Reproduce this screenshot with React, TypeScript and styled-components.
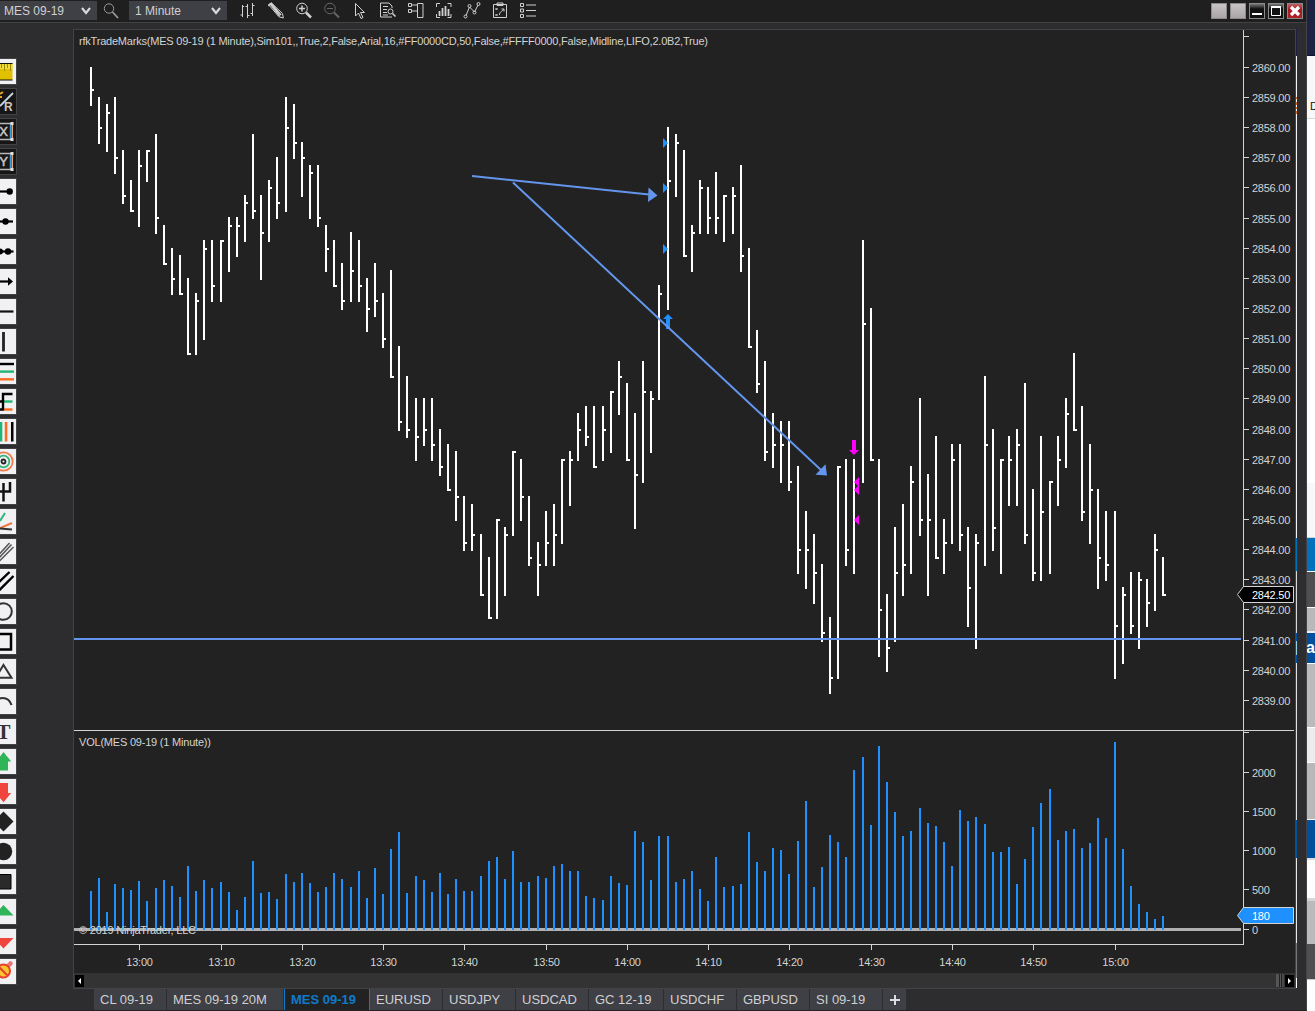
import type { ReactNode } from "react";
import styled, { createGlobalStyle } from "styled-components";

// one entry per minute, starting 12:54: [high, low, close, volume] on the plot's y scale
const bars: [number, number, number, number][] = [
  [67, 106, 89, 891], [97, 144, 127, 878], [104, 152, 112, 912], [97, 174, 157, 884],
  [150, 204, 195, 888], [180, 212, 210, 890], [150, 227, 165, 881], [150, 182, 150, 901],
  [134, 234, 217, 888], [225, 265, 263, 880], [248, 295, 278, 886], [255, 295, 293, 897],
  [278, 355, 353, 866], [293, 355, 300, 891], [240, 340, 248, 880], [240, 302, 285, 888],
  [240, 302, 240, 882], [217, 272, 225, 892], [217, 257, 225, 910], [195, 242, 202, 897],
  [134, 219, 210, 861], [195, 280, 232, 893], [180, 242, 187, 892], [157, 219, 202, 899],
  [97, 212, 127, 874], [104, 159, 142, 882], [142, 197, 157, 873], [165, 219, 172, 883],
  [165, 227, 217, 892], [225, 272, 248, 887], [240, 287, 285, 873], [263, 310, 300, 879],
  [232, 302, 270, 887], [240, 302, 285, 871], [278, 332, 308, 898], [263, 317, 300, 868],
  [293, 348, 338, 894], [270, 378, 376, 849], [346, 431, 421, 832], [376, 438, 429, 893],
  [398, 461, 436, 876], [398, 446, 429, 880], [398, 461, 444, 892], [429, 476, 466, 873],
  [444, 491, 489, 894], [451, 521, 496, 879], [496, 551, 542, 891], [504, 551, 534, 891],
  [534, 596, 594, 876], [557, 619, 617, 861], [519, 619, 519, 857], [527, 596, 534, 879],
  [451, 536, 451, 851], [459, 521, 496, 882], [496, 566, 557, 882], [542, 596, 564, 876],
  [511, 566, 542, 878], [504, 566, 534, 866], [459, 544, 459, 864], [451, 506, 459, 871],
  [413, 461, 429, 871], [406, 446, 436, 896], [406, 468, 466, 898], [406, 461, 429, 900],
  [391, 453, 391, 876], [361, 415, 376, 883], [383, 461, 459, 885], [413, 529, 474, 831],
  [361, 483, 391, 842], [391, 453, 398, 880], [285, 400, 293, 836], [127, 310, 180, 836],
  [134, 197, 142, 882], [150, 257, 255, 879], [225, 272, 232, 871], [180, 234, 187, 889],
  [187, 234, 217, 901], [172, 234, 217, 857], [195, 242, 195, 887], [187, 234, 195, 886],
  [165, 272, 255, 884], [248, 348, 346, 832], [330, 393, 383, 862], [361, 461, 451, 871],
  [413, 468, 444, 848], [421, 483, 444, 850], [421, 491, 481, 874], [466, 574, 549, 841],
  [511, 589, 549, 801], [534, 604, 572, 887], [564, 642, 632, 867], [617, 694, 677, 835],
  [466, 679, 466, 842], [459, 566, 549, 857], [459, 574, 481, 770], [240, 483, 323, 757],
  [308, 461, 459, 825], [459, 657, 609, 746], [594, 672, 647, 782], [527, 642, 572, 812],
  [504, 596, 564, 836], [466, 574, 481, 831], [398, 536, 519, 808], [474, 596, 519, 823],
  [436, 559, 557, 826], [519, 574, 542, 842], [444, 544, 459, 866], [444, 551, 534, 810],
  [527, 627, 587, 821], [534, 649, 542, 817], [376, 566, 444, 824], [429, 551, 527, 852],
  [459, 574, 459, 852], [436, 506, 459, 847], [429, 506, 444, 884], [383, 544, 534, 859],
  [489, 581, 572, 827], [436, 581, 511, 803], [481, 574, 481, 789], [436, 506, 459, 840],
  [398, 468, 413, 831], [353, 431, 429, 829], [406, 521, 511, 848], [444, 544, 489, 843],
  [489, 589, 557, 818], [511, 581, 564, 838], [511, 679, 625, 742], [587, 664, 594, 849],
  [572, 634, 625, 886], [572, 649, 579, 904], [579, 627, 602, 912], [534, 611, 549, 919],
  [557, 596, 594, 916],
];

const barX = (i: number) => Math.floor(90 + 8.1275 * i);

const prices = Array.from({ length: 22 }, (_, i) => ({
  label: `${2860 - i}.00`,
  y: Math.floor(67.4 + 30.14 * i),
}));

const volumes = [
  { label: "2000", y: 772 },
  { label: "1500", y: 811 },
  { label: "1000", y: 850 },
  { label: "500", y: 889 },
  { label: "0", y: 929 },
];

const times = [
  "13:00", "13:10", "13:20", "13:30", "13:40", "13:50", "14:00",
  "14:10", "14:20", "14:30", "14:40", "14:50", "15:00",
];

const tabs = [
  { name: "CL 09-19", width: 72 },
  { name: "MES 09-19 20M", width: 116 },
  { name: "MES 09-19", width: 86, active: true },
  { name: "EURUSD", width: 72 },
  { name: "USDJPY", width: 72 },
  { name: "USDCAD", width: 72 },
  { name: "GC 12-19", width: 74 },
  { name: "USDCHF", width: 72 },
  { name: "GBPUSD", width: 72 },
  { name: "SI 09-19", width: 72 },
];

const backdrop = [
  [55, "#1d2343"], [1, "#10142c"], [62, "#f8f8f9"], [1, "#d8d8d8"],
  [364, "#ffffff"], [54, "#f8f8f8"], [1, "#d5d5d5"], [33, "#0072bc"],
  [1, "#ffffff"], [35, "#4f4f4f"], [1, "#ffffff"], [23, "#b9b9b9"],
  [2, "#efefef"], [30, "#004f9e"], [1, "#ffffff"], [63, "#bababa"],
  [1, "#ffffff"], [34, "#ececec"], [1, "#ffffff"], [56, "#b8b8b8"],
  [1, "#ffffff"], [38, "#00519c"], [2, "#dcdcdc"], [38, "#fdfdfd"],
  [3, "#d6d6d6"], [43, "#bababa"], [35, "#4f4f4f"], [1, "#c8c8c8"],
  [31, "#fdfdfd"],
] as [number, string][];

const sliver = [
  [27, "#1d2040"], [41, "#f4f4f4"], [2, "#d2691e"], [3, "#f4f4f4"],
  [3, "#d2691e"], [2, "#f4f4f4"], [2, "#d2691e"], [2, "#f4f4f4"],
  [3, "#d2691e"], [424, "#f4f4f4"], [33, "#0072bc"], [62, "#d8d8d8"],
  [8, "#004f9e"], [14, "#9ad3e0"], [8, "#004f9e"], [157, "#e0e0e0"],
  [38, "#00519c"], [85, "#e6e6e6"], [35, "#777777"], [10, "#ffffff"],
] as [number, string][];

const tools: { dark?: boolean; art: ReactNode }[] = [
  {
    art: (
      <>
        <path d="M0 4h12.5v17H0z" fill="#e0c000" />
        <path d="M0 5h12.5v5H0z" fill="#f2dc38" />
        <path d="M1.5 5v4M4.5 5v7M7.5 5v4M10.500 5v7" stroke="#a08a00" />
        <path d="M0 4.5h12.5M0 21h12.5" stroke="#111" />
      </>
    ),
  },
  {
    dark: true,
    art: (
      <>
        <path d="M0 5l3-2M0 8h2" stroke="#f0a020" strokeWidth="2" />
        <path d="M0 17L13 4" stroke="#c9d8e4" strokeWidth="1.8" />
        <text x="4" y="22" fontSize="12" fontWeight="bold" fill="#cfc4b8">R</text>
      </>
    ),
  },
  ...["X", "Y"].map((letter) => ({
    dark: true,
    art: (
      <>
        <path d="M0 4.5h12M0 20.5h12" stroke="#b8b8b8" strokeWidth="1.5" />
        <path d="M10.5 5v15" stroke="#3d9be0" strokeWidth="1.5" />
        <path d="M12.3 5v15" stroke="#e8a878" strokeWidth="1.5" />
        <path d="M10.5 3h3v3h-3zM10.5 19h3v3h-3z" fill="#e8dcd4" />
        <text x="-.8" y="17" fontSize="13" fill="#c8c4c0" stroke="#c8c4c0" strokeWidth=".5">{letter}</text>
      </>
    ),
  })),
  { art: <><path d="M0 12.5h10" stroke="#000" strokeWidth="2.2" /><circle cx="9.7" cy="12.5" r="3.2" /></> },
  { art: <><path d="M0 12.5h13" stroke="#000" strokeWidth="2.2" /><circle cx="5.5" cy="12.5" r="3.2" /></> },
  { art: <><path d="M0 12.5h13.5" stroke="#000" strokeWidth="2.2" /><circle cx="0" cy="12.5" r="3" /><circle cx="8" cy="12.5" r="3.2" /></> },
  { art: <><path d="M0 12.5h11" stroke="#000" strokeWidth="2.2" /><path d="M8 8.2l5 4.3-5 4.3z" /></> },
  { art: <path d="M0 12.5h13.5" stroke="#111" strokeWidth="2.2" /> },
  { art: <path d="M3.5 3v19.5" stroke="#222" strokeWidth="2.8" /> },
  {
    art: (
      <g strokeWidth="2.4">
        <path d="M0 5h14" stroke="#000" />
        <path d="M0 12.6h14" stroke="#22b573" />
        <path d="M0 20.3h14" stroke="#ff6a20" />
      </g>
    ),
  },
  {
    art: (
      <g fill="none" strokeWidth="2.4">
        <path d="M3.5 12.5h9" stroke="#22b573" />
        <path d="M2 20.5h10.500" stroke="#ff6a20" />
        <path d="M0 20.5h3M3 21.5V5h9.500M0 12.500h3" stroke="#000" />
      </g>
    ),
  },
  {
    art: (
      <>
        <path d="M0 3h2.3v19.5H0z" fill="#22b573" />
        <path d="M4.8 3h2.5v19.5H4.8z" fill="#ff6a20" />
        <path d="M11 3h2.5v19.5H11z" />
      </>
    ),
  },
  {
    art: (
      <g fill="none" strokeWidth="1.8">
        <circle cx="3.5" cy="12.5" r="9.2" stroke="#f08050" />
        <circle cx="3.5" cy="12.5" r="5.8" stroke="#35b57a" />
        <circle cx="3.5" cy="12.5" r="2" stroke="#222" />
      </g>
    ),
  },
  { art: <path d="M3.5 4v18.5M10 3v9.500H0" stroke="#111" strokeWidth="2.5" fill="none" /> },
  {
    art: (
      <g strokeWidth="2">
        <path d="M0 12L5 4" stroke="#35b57a" />
        <path d="M0 19l12-5" stroke="#f07840" />
        <path d="M0 19.5l12 1" stroke="#333" />
      </g>
    ),
  },
  { art: <path d="M-2 16.5L9.5 4M-2 20L11.5 5.500M-2 23.500L13.500 8" stroke="#555" strokeWidth="1.5" /> },
  { art: <path d="M-2 14L9.5 3M-2 22.500L13.500 7" stroke="#000" strokeWidth="2.4" /> },
  { art: <circle cx="3.5" cy="12.5" r="8.3" fill="none" stroke="#333" strokeWidth="2" /> },
  { art: <path d="M-3 5h14v15.500h-14" fill="none" stroke="#000" strokeWidth="2.5" /> },
  { art: <path d="M3.5 6l8 12.800h-16z" fill="none" stroke="#333" strokeWidth="2" /> },
  { art: <path d="M-1 9.500C5 8 9.500 10 11.500 16" fill="none" stroke="#333" strokeWidth="2.200" /> },
  { art: <text x="-3.5" y="19.5" fontSize="21" fontWeight="bold" fontFamily="Liberation Serif, serif" fill="#333">T</text> },
  { art: <path d="M3.5 3l7.700 9.500H8v9H-1v-9h-3z" fill="#2fb457" /> },
  { art: <path d="M-1 4h9v10h3.200L3.500 23.200-4 14h3z" fill="#f0453f" /> },
  { art: <path d="M3.5 2.500l10 10-10 10-10-10z" fill="#222" /> },
  { art: <circle cx="3.5" cy="12.5" r="8.7" fill="#222" /> },
  { art: <path d="M-4 5.500h15v14.500h-15z" fill="#2a2a2a" stroke="#000" /> },
  { art: <path d="M3.5 6l10 10.500h-20z" fill="#2fb457" /> },
  { art: <path d="M3.5 19.500l10-10.500h-20z" fill="#f0453f" /> },
  {
    art: (
      <>
        <path d="M6 9l4.500-4.500" stroke="#e87878" strokeWidth="4.5" strokeLinecap="round" />
        <circle cx="3.5" cy="12" r="6.5" fill="#f7c52d" stroke="#e8412f" strokeWidth="2" />
        <path d="M-1 8l9 9" stroke="#e8412f" strokeWidth="2" />
      </>
    ),
  },
];

const toolbarIcons: { dim?: boolean; art: ReactNode }[] = [
  { art: <path d="M3.500 5v12M1.500 15h2M3.500 6.500h1.500M8.500 4v14M6.500 6.500h2M8.500 15.500h2M13.500 3v13M11.500 13.500h2M13.500 5.500h2" /> },
  {
    art: (
      <>
        <path d="M1.500 4.500l3-1.500 11 10.500.8 4.500-4.300-1.200z" />
        <path d="M3 3.500l9.500 12.500M4 3l10 12M1.500 6l3-3" strokeWidth="1.5" />
      </>
    ),
  },
  { art: <><circle cx="7" cy="8.5" r="5.3" /><path d="M4 8.500h6M7 5.500v6" strokeWidth="1.5" /><path d="M11 12.500l5 5" strokeWidth="2.5" /></> },
  { dim: true, art: <><circle cx="7" cy="8.5" r="5.3" /><path d="M4 8.500h6" /><path d="M11 12.500l5 5" strokeWidth="2" /></> },
  { art: <path d="M4.500 3.500v12.500l3-3 2.500 5.500 2-1-2.500-5h4z" /> },
  {
    art: (
      <>
        <path d="M13 8V6l-3-3H1.500v14H13M4 6.500h5M4 9.500h4M4 12.500h4M4 15h5" />
        <circle cx="11.5" cy="11.5" r="2.5" />
        <path d="M13.500 13.500l3 3" strokeWidth="1.6" />
      </>
    ),
  },
  { art: <path d="M1.500 3.500h3v3h-3zM1.500 9.500h3v3h-3zM10.500 3.500h5.500v14h-5.500zM5 5h5.500M5 11h5.500" /> },
  {
    art: (
      <>
        <path d="M5 3.500H1.500V7M12.500 3.500h3.500V7M5 17.500H1.500V14M12.500 17.500h3.500V14" />
        <path d="M4.500 11v5M7.500 8v8M10.500 6v10M13.500 9v7" strokeWidth="1.8" />
      </>
    ),
  },
  {
    art: (
      <>
        <path d="M3 15.500L6.500 7l5 5L15 5" />
        <circle cx="2.5" cy="16.5" r="1.5" /><circle cx="6.5" cy="6" r="1.5" />
        <circle cx="11.5" cy="12.5" r="1.5" /><circle cx="15.5" cy="4" r="1.5" />
      </>
    ),
  },
  {
    art: (
      <>
        <path d="M2.500 4.500h13v13h-13zM6 3h6v2.500H6z" />
        <path d="M4.500 8l2 2m0-2l-2 2M4.500 14l2 2m0-2l-2 2M8.500 15c0-4 3-3 4-6M10.500 9h2.500v2.500" />
      </>
    ),
  },
  { art: <path d="M1.500 3.500h3v3h-3zM1.500 9h3v3h-3zM1.500 14.500h3v3h-3zM7 5h10M7 10.500h10M7 16h10" /> },
];

const Chart = () => (
  <Plot viewBox="74 30 1221 943">
    <g fill="#d3d3d3" shapeRendering="crispEdges">
      <rect x="1243" y="30" width="1" height="915" />
      <rect x="74" y="730" width="1220" height="1" />
      <rect x="74" y="944" width="1170" height="1" />
      <rect x="1243" y="36" width="6" height="1" />
      <rect x="1243" y="732" width="6" height="1" />
      {[...prices, ...volumes].map(({ label, y }) => (
        <rect key={label} x="1243" y={y} width="6" height="1" />
      ))}
      {times.map((time, i) => (
        <rect key={time} x={barX(6 + i * 10) + 1} y="944" width="1" height="6" />
      ))}
    </g>

    <Label x="79" y="45" textLength="629">
      rfkTradeMarks(MES 09-19 (1 Minute),Sim101,,True,2,False,Arial,16,#FF0000CD,50,False,#FFFF0000,False,Midline,LIFO,2.0B2,True)
    </Label>
    <Label x="79" y="746" textLength="132">VOL(MES 09-19 (1 Minute))</Label>
    {[...prices, ...volumes].map(({ label, y }) => (
      <Label key={label} x="1252" y={y + 5} $tight>{label}</Label>
    ))}
    {times.map((time, i) => (
      <Label key={time} x={barX(6 + i * 10) + 1.5} y="966" textAnchor="middle" $tight>{time}</Label>
    ))}

    <g shapeRendering="crispEdges">
      <rect x="74" y="928" width="1167" height="3" fill="#b0b0b0" />
      {bars.map(([high, low, close, volume], i) => (
        <g key={i} fill="#fff">
          <rect x={barX(i)} y={high} width="2" height={low - high} />
          <rect x={barX(i) + 2} y={close} width="2" height="2" />
          <rect x={barX(i)} y={volume} width="2" height={930 - volume} fill="#1e90ff" />
        </g>
      ))}
    </g>
    <Label x="79" y="934" textLength="117">© 2019 NinjaTrader, LLC</Label>

    <g fill="#1e90ff">
      {[143, 188, 249].map((y) => (
        <path key={y} d={`M663 ${y - 5}l5 5-5 5z`} />
      ))}
      <path d="M668 314l5 5h-3v10h-4v-10h-3z" />
    </g>
    <g fill="#f0f">
      {[482, 490, 520].map((y) => (
        <path key={y} d={`M859 ${y - 5}l-5 5 5 5z`} />
      ))}
      <path d="M852 440h4v10h3l-5 5-5-5h3z" />
    </g>

    <g stroke="#6495ed" strokeWidth="2">
      <path d="M74 639H1241" />
      <path d="M472 176L649 194.500M513 182.500L821 470" />
    </g>
    <path d="M648.500 187.500L657.500 195.500 648 202zM815.500 474.700L825.500 464.300 827 475.500z" fill="#6495ed" />

    <path d="M1237.500 594.500L1243.500 586.500H1293.500V602.500H1243.500z" fill="#000" stroke="#d3d3d3" />
    <Label x="1252" y="599" $bright $tight>2842.50</Label>
    <path d="M1237.500 915.500L1243.500 907.500H1293.500V923.500H1243.500z" fill="#1e90ff" stroke="#d3d3d3" />
    <Label x="1252" y="920" $bright $tight>180</Label>
  </Plot>
);

const App = () => (
  <Screen>
    <GlobalStyle />
    <Window>
      <Toolbar>
        <Select $width={97}>
          MES 09-19
          <Chevron />
        </Select>
        <Search viewBox="0 0 16 20">
          <circle cx="6" cy="7.5" r="4.7" />
          <path d="M9.500 11l5.500 6" strokeWidth="1.8" />
        </Search>
        <Select $width={98} $inset={6}>
          1 Minute
          <Chevron />
        </Select>
        <Icons>
          {toolbarIcons.map(({ dim, art }, i) => (
            <Icon key={i} viewBox="0 0 18 20" $dim={dim}>{art}</Icon>
          ))}
        </Icons>
        <WindowButtons>
          <WindowButton $color="linear-gradient(#c8c4c6, #aaa6a8)" />
          <WindowButton $color="linear-gradient(#c8c4c6, #aaa6a8)" />
          <WindowButton $color="linear-gradient(#777, #111 35%, #111)">
            <svg viewBox="0 0 14 14"><path d="M2 10h10" stroke="#fff" strokeWidth="2" /></svg>
          </WindowButton>
          <WindowButton $color="linear-gradient(#777, #111 35%, #111)">
            <svg viewBox="0 0 14 14" fill="none" stroke="#fff"><path d="M2.500 2.500h9v9h-9z" /><path d="M2 3h10" strokeWidth="2" /></svg>
          </WindowButton>
          <WindowButton $color="linear-gradient(#c06060, #a81820 40%, #b02028)">
            <svg viewBox="0 0 14 14"><path d="M3 3l8 8M11 3l-8 8" stroke="#fff" strokeWidth="3.2" /></svg>
          </WindowButton>
        </WindowButtons>
      </Toolbar>

      <Body>
        <Palette>
          {tools.map(({ dark, art }, i) => (
            <Tool key={i} viewBox="0 0 16 25" $dark={dark}>{art}</Tool>
          ))}
        </Palette>
        <Main>
          <Frame>
            <Chart />
            <ScrollBar>
              <ScrollButton><svg viewBox="0 0 9 12"><path d="M6 3v6L3 6z" fill="#fff" /></svg></ScrollButton>
              <Thumb />
              <ScrollButton><svg viewBox="0 0 9 12"><path d="M3 3v6l3-3z" fill="#fff" /></svg></ScrollButton>
            </ScrollBar>
          </Frame>
          <Tabs>
            {tabs.map(({ name, width, active }) => (
              <Tab key={name} $width={width} $active={active}>{name}</Tab>
            ))}
            <AddTab>
              <svg viewBox="0 0 10 10" width="10" height="10"><path d="M0 5h10M5 0v10" stroke="#ddd" strokeWidth="2" /></svg>
            </AddTab>
          </Tabs>
        </Main>
        <Sliver>
          {sliver.map(([height, color], i) => (
            <Band key={i} $height={height} $color={color} />
          ))}
        </Sliver>
      </Body>
    </Window>
    <Backdrop>
      {backdrop.map(([height, color], i) => (
        <Band key={i} $height={height} $color={color}>
          {i === 2 && <Glyph $color="#111">D</Glyph>}
          {i === 13 && <Glyph $color="#fff" $big>a</Glyph>}
        </Band>
      ))}
    </Backdrop>
  </Screen>
);

export default App;

const GlobalStyle = createGlobalStyle`
  * {
    box-sizing: border-box;
  }

  body {
    margin: 0;
    overflow: hidden;
    background: #2d2d30;
    font-family: "Liberation Sans", Arial, sans-serif;
  }
`;

const Screen = styled.div`
  display: flex;
  width: 1315px;
  height: 1011px;
  overflow: hidden;
`;

const Window = styled.div`
  display: flex;
  flex-direction: column;
  width: 1307px;
  background: #2d2d30;
  border-right: 1px solid #434346;
  border-bottom: 1px solid #291f27;
`;

const Toolbar = styled.div`
  display: flex;
  height: 23px;
  padding-top: 1px;
  background: #1f1f1f;
  border-bottom: 1px solid #434346;
`;

const Select = styled.div<{ $width: number; $inset?: number }>`
  display: flex;
  align-items: center;
  justify-content: space-between;
  width: ${({ $width }) => $width}px;
  height: 19px;
  padding: 0 6px 0 ${({ $inset }) => $inset ?? 4}px;
  background: #3f3f46;
  color: #d0d0d0;
  font-size: 12px;
`;

const ChevronIcon = styled.svg`
  width: 10px;
  height: 8px;
  fill: none;
  stroke: #d8d8d8;
  stroke-width: 2.2;
`;

const Chevron = () => (
  <ChevronIcon viewBox="0 0 10 8">
    <path d="M1 1l4 5 4-5" />
  </ChevronIcon>
);

const Search = styled.svg`
  width: 16px;
  height: 20px;
  margin: 0 10px 0 6px;
  fill: none;
  stroke: #999;
`;

const Icons = styled.div`
  display: flex;
  gap: 10px;
  margin: -1px 0 0 12px;
`;

const Icon = styled.svg<{ $dim?: boolean }>`
  width: 18px;
  height: 20px;
  fill: none;
  stroke: ${({ $dim }) => ($dim ? "#666" : "#d0d0d0")};
`;

const WindowButtons = styled.div`
  display: flex;
  gap: 3px;
  margin: 2px 3px 0 auto;
`;

const WindowButton = styled.div<{ $color: string }>`
  width: 16px;
  height: 16px;
  background: ${({ $color }) => $color};
  border: 1px solid #8a8a8a;

  svg {
    display: block;
    width: 14px;
    height: 14px;
  }
`;

const Body = styled.div`
  display: flex;
  flex: 1;
`;

const Palette = styled.div`
  display: flex;
  flex-direction: column;
  gap: 5px;
  width: 73px;
  padding-top: 36px;
`;

const Tool = styled.svg<{ $dark?: boolean }>`
  flex: none;
  width: 16px;
  height: 25px;
  background: ${({ $dark }) => ($dark ? "#161616" : "#f1f0f2")};
  box-shadow: 0 0 0 1px #434346;
`;

const Main = styled.div`
  display: flex;
  flex-direction: column;
  width: 1223px;
  padding-top: 6px;
`;

const Frame = styled.div`
  height: 960px;
  border: 1px solid #434346;
  background: #222;
`;

const Plot = styled.svg`
  display: block;
  width: 1221px;
  height: 943px;
`;

const Label = styled.text<{ $bright?: boolean; $tight?: boolean }>`
  font-size: 11px;
  letter-spacing: ${({ $tight }) => ($tight ? "-0.25px" : "normal")};
  fill: ${({ $bright }) => ($bright ? "#fff" : "#d3d3d3")};
`;

const ScrollBar = styled.div`
  display: flex;
  align-items: center;
  height: 15px;
  padding: 0 1px;
  background: #333;
`;

const ScrollButton = styled.div`
  width: 9px;
  height: 12px;
  background: #000;

  svg {
    display: block;
  }
`;

const Thumb = styled.div`
  width: 8px;
  height: 13px;
  margin: 0 1px 0 auto;
  background: linear-gradient(90deg, #555 3px, #222 3px, #222 4px, #555 4px, #555 5px, #222 5px, #222 6px, #4a4a4a 6px);
`;

const Tabs = styled.div`
  display: flex;
  gap: 1px;
  height: 21px;
  padding-left: 21px;
`;

const Tab = styled.div<{ $width: number; $active?: boolean }>`
  width: ${({ $width }) => $width}px;
  margin-right: ${({ $active }) => ($active ? -1 : 0)}px;
  padding-left: ${({ $active }) => ($active ? 7 : 6)}px;
  line-height: 21px;
  font-size: 13px;
  white-space: nowrap;
  color: ${({ $active }) => ($active ? "#0e7acb" : "#d0d0d0")};
  font-weight: ${({ $active }) => ($active ? "bold" : "normal")};
  background: ${({ $active }) => ($active ? "#222" : "#3f3f46")};
  box-shadow: ${({ $active }) => ($active ? "inset 1px 0 #0e7acb, inset -1px 0 #0e7acb" : "none")};
`;

const AddTab = styled.div`
  display: flex;
  align-items: center;
  justify-content: center;
  width: 23px;
  background: #3f3f46;
`;

const Sliver = styled.div`
  width: 1px;
  padding-top: 6px;
`;

const Backdrop = styled.div`
  width: 8px;
  overflow: hidden;
`;

const Band = styled.div<{ $height: number; $color: string }>`
  display: flex;
  align-items: center;
  height: ${({ $height }) => $height}px;
  background: ${({ $color }) => $color};
`;

const Glyph = styled.span<{ $color: string; $big?: boolean }>`
  margin-left: ${({ $big }) => ($big ? -1 : 3)}px;
  padding-top: ${({ $big }) => ($big ? 0 : 38)}px;
  color: ${({ $color }) => $color};
  font-size: ${({ $big }) => ($big ? 16 : 11)}px;
  font-weight: ${({ $big }) => ($big ? "bold" : "normal")};
`;
